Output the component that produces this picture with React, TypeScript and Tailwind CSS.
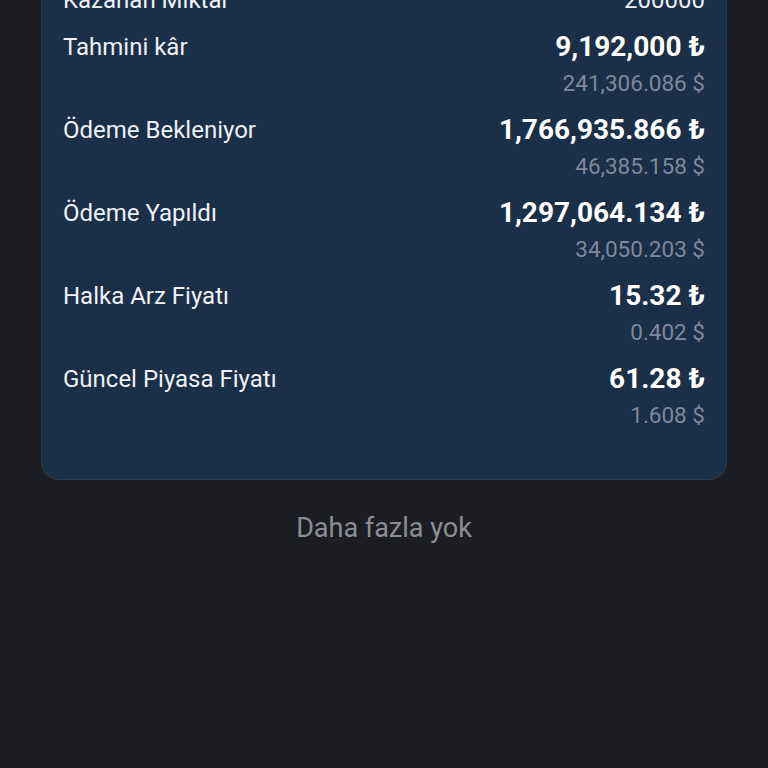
type Row = {
  label: string;
  value: string;
  usd?: string;
};

const rows: Row[] = [
  { label: "Kazanan Miktar", value: "200000" },
  { label: "Tahmini kâr", value: "9,192,000 ₺", usd: "241,306.086 $" },
  { label: "Ödeme Bekleniyor", value: "1,766,935.866 ₺", usd: "46,385.158 $" },
  { label: "Ödeme Yapıldı", value: "1,297,064.134 ₺", usd: "34,050.203 $" },
  { label: "Halka Arz Fiyatı", value: "15.32 ₺", usd: "0.402 $" },
  { label: "Güncel Piyasa Fiyatı", value: "61.28 ₺", usd: "1.608 $" },
];

export default function App() {
  return (
    <div className="h-[768px] overflow-hidden bg-[#1c1d22] font-['Roboto','Noto_Sans',sans-serif]">
      {/* Summary card (scrolled, top is cut off) */}
      <div className="mx-[41px] -mt-[40px] rounded-[18px] border border-[#2a3c52] bg-[#1a2f48] px-[21px] pt-[21px] pb-[46px]">
        <div className="flex flex-col gap-[11px]">
          {rows.map((row) => (
            <div key={row.label} className="flex items-start justify-between">
              <span className="text-[24px] leading-[36px] text-[#eef1f5]">{row.label}</span>
              <div className="text-right">
                {row.usd ? (
                  <>
                    <p className="text-[28px] font-bold leading-[36px] text-white">{row.value}</p>
                    <p className="text-[22.5px] leading-[36px] text-[#7c899b]">{row.usd}</p>
                  </>
                ) : (
                  <p className="text-[24px] leading-[36px] text-[#eef1f5]">{row.value}</p>
                )}
              </div>
            </div>
          ))}
        </div>
      </div>

      <p className="mt-[32px] text-center text-[27px] leading-[32px] text-[#8c8d92]">Daha fazla yok</p>
    </div>
  );
}
